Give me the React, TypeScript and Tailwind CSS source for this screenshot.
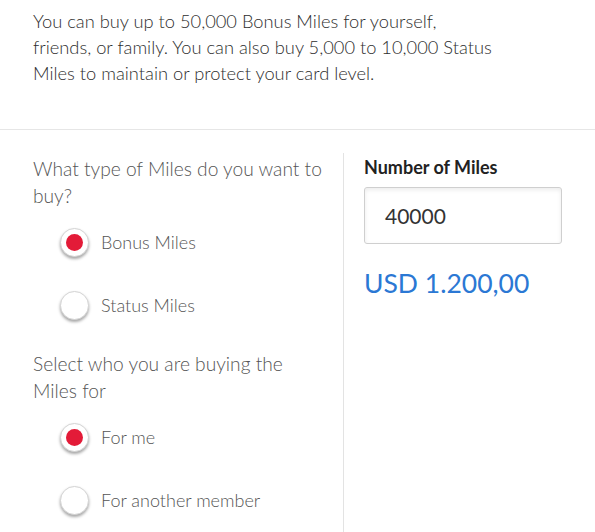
import React from "react";

const Radio = ({ label, checked }: { label: string; checked?: boolean }) => {
  return (
    <div className="flex items-center h-[26px]">
      <div className="w-[29px] h-[29px] rounded-full bg-white border border-[#d4d4d4] shadow-[0_2px_3px_rgba(0,0,0,0.35)] flex items-center justify-center">
        {checked && <div className="w-[17px] h-[17px] rounded-full bg-[#e31b38]" />}
      </div>
      <span className="ml-[12px] text-[18px] text-[#555]">{label}</span>
    </div>
  );
};

const App = () => {
  return (
    <div className="w-[595px] h-[532px] bg-white overflow-hidden font-['Lato','Liberation_Sans',sans-serif] font-light">
      <div className="px-[33px] pt-[8px] h-[130px] border-b border-[#e6e6e6]">
        <p className="text-[18.3px] leading-[26px] text-[#2e2e2e]">
          You can buy up to 50,000 Bonus Miles for yourself,
          <br />
          friends, or family. You can also buy 5,000 to 10,000 Status
          <br />
          Miles to maintain or protect your card level.
        </p>
      </div>
      <div className="flex">
        <div className="w-[343px] pl-[33px] pt-[25px] pr-[6px]">
          <p className="text-[19.2px] leading-[27px] text-[#555]">What type of Miles do you want to buy?</p>
          <div className="pl-[27px] pt-[20px] flex flex-col gap-[37px]">
            <Radio label="Bonus Miles" checked />
            <Radio label="Status Miles" />
          </div>
          <p className="mt-[32px] w-[275px] text-[19.2px] leading-[27px] text-[#555]">
            Select who you are buying the Miles for
          </p>
          <div className="pl-[27px] pt-[20px] flex flex-col gap-[37px]">
            <Radio label="For me" checked />
            <Radio label="For another member" />
          </div>
        </div>
        <div className="mt-[23px] border-l border-[#e3e3e3] pl-[20px] pt-[3px] h-[400px]">
          <p className="text-[18px] font-bold text-[#222] leading-[22px]">Number of Miles</p>
          <div className="mt-[9px] w-[198px] h-[57px] border border-[#cfcfcf] rounded-[3px] shadow-[inset_0_2px_4px_rgba(0,0,0,0.08)] flex items-center pl-[20px]">
            <span className="text-[21px] font-normal text-[#333]">40000</span>
          </div>
          <p className="mt-[24px] text-[26.5px] font-normal text-[#2b78d4] leading-[30px]">USD 1.200,00</p>
        </div>
      </div>
    </div>
  );
};

export default App;
